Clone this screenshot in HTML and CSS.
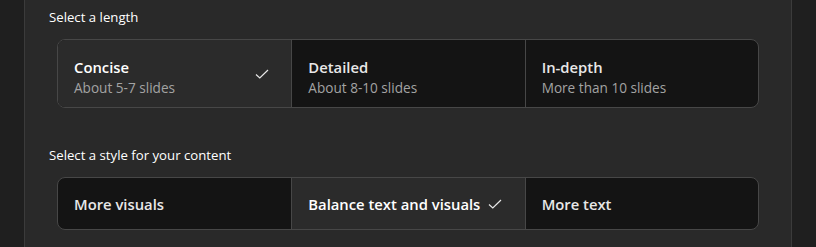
FILE: index.html
```html
<!DOCTYPE html>
<html lang="en">
<head>
    <meta charset="UTF-8">
    <meta name="viewport" content="width=device-width, initial-scale=1.0">
    <title>Presentation Options</title>
    <link rel="stylesheet" href="styles.css">
</head>
<body>
    <div class="panel">
        <div class="field-label">Select a length</div>
        <div class="choice-group">
            <div class="choice selected">
                <div class="choice-text">
                    <div class="choice-title">Concise</div>
                    <div class="choice-sub">About 5-7 slides</div>
                </div>
                <svg class="check" width="14" height="10" viewBox="0 0 14 10"><path d="M1 5.5 L4.8 9 L13 1" fill="none" stroke="#e6e6e6" stroke-width="1.2"/></svg>
            </div>
            <div class="choice">
                <div class="choice-text">
                    <div class="choice-title">Detailed</div>
                    <div class="choice-sub">About 8-10 slides</div>
                </div>
            </div>
            <div class="choice">
                <div class="choice-text">
                    <div class="choice-title">In-depth</div>
                    <div class="choice-sub">More than 10 slides</div>
                </div>
            </div>
        </div>

        <div class="field-label spaced">Select a style for your content</div>
        <div class="choice-group compact">
            <div class="choice">
                <div class="choice-title">More visuals</div>
            </div>
            <div class="choice selected inline">
                <div class="choice-title">Balance text and visuals</div>
                <svg class="check" width="14" height="10" viewBox="0 0 14 10"><path d="M1 5.5 L4.8 9 L13 1" fill="none" stroke="#e6e6e6" stroke-width="1.2"/></svg>
            </div>
            <div class="choice">
                <div class="choice-title">More text</div>
            </div>
        </div>
    </div>
</body>
</html>
```

FILE: styles.css
```css
html, body {
    height: 100%;
}
body {
    margin: 0;
    background-color: #1f1f1f;
    font-family: "Open Sans", "Noto Sans", sans-serif;
    color: #fff;
}
.panel {
    margin: 0 24px;
    height: 100%;
    box-sizing: border-box;
    padding: 7px 32px 0 32px;
    background-color: #292929;
    border-left: 1px solid #3b3b3b;
    border-right: 1px solid #3b3b3b;
}
.field-label {
    margin-left: -8px;
    font-size: 13.2px;
    line-height: 20px;
    color: #fff;
}
.field-label.spaced {
    margin-top: 37px;
}
.choice-group {
    margin-top: 12px;
    display: grid;
    grid-template-columns: 1fr 1fr 1fr;
    height: 69px;
    box-sizing: border-box;
    border: 1px solid #474747;
    border-radius: 8px;
    overflow: hidden;
    background-color: #141414;
}
.choice-group.compact {
    height: 53px;
}
.choice {
    display: flex;
    align-items: center;
    justify-content: space-between;
    padding: 0 22px 0 16px;
}
.choice + .choice {
    border-left: 1px solid #474747;
}
.choice.selected {
    background-color: #2b2b2b;
}
.choice.inline {
    justify-content: flex-start;
    gap: 8px;
}
.choice-text {
    padding-top: 8px;
}
.choice-title {
    font-size: 14.8px;
    font-weight: 600;
    line-height: 20px;
    color: #e8e8e8;
}
.choice.selected .choice-title {
    color: #fff;
}
.choice-sub {
    font-size: 13.6px;
    line-height: 21px;
    color: #a3a3a3;
}
.check {
    display: block;
}
```
